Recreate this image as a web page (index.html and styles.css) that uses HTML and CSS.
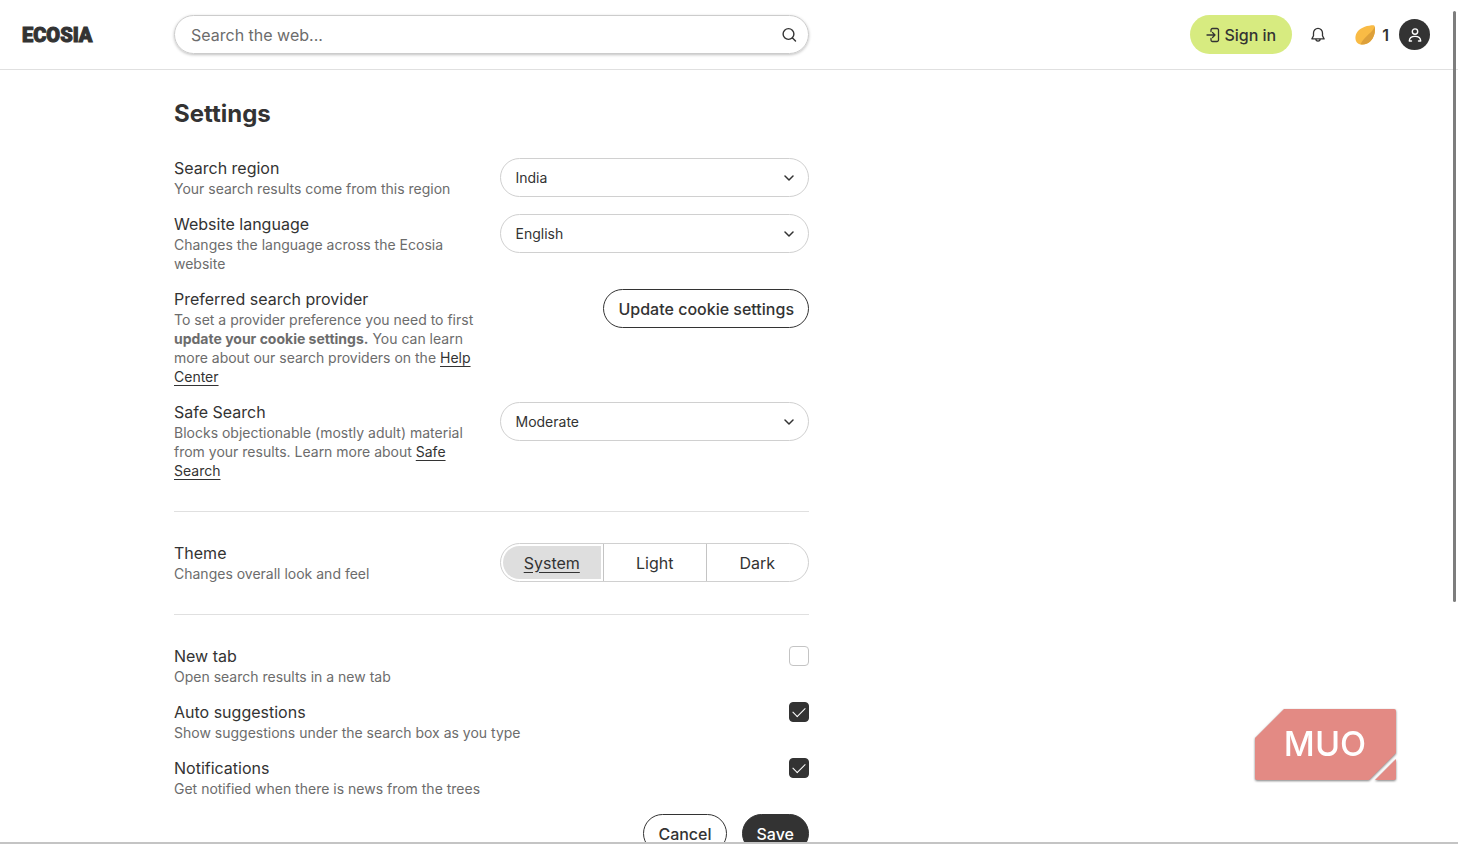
FILE: index.html
```
<!DOCTYPE html>
<html lang="en">
<head>
    <meta charset="UTF-8">
    <meta name="viewport" content="width=device-width, initial-scale=1.0">
    <title>Ecosia - Settings</title>
    <link rel="stylesheet" href="styles.css">
</head>
<body>
    <header class="header">
        <a class="logo" href="#">ECOSIA</a>
        <form class="search" role="search">
            <input class="search-input" type="search" placeholder="Search the web..." aria-label="Search the web">
            <button class="search-btn" type="submit" aria-label="Search">
                <svg width="16" height="16" viewBox="0 0 16 16" fill="none" stroke="currentColor" stroke-width="1.4" stroke-linecap="round">
                    <circle cx="7.500" cy="7" r="5.400"/>
                    <path d="M11.500 11l3 3"/>
                </svg>
            </button>
        </form>
        <nav class="header-nav">
            <a class="sign-in" href="#">
                <svg width="14" height="16" viewBox="0 0 14 16" fill="none" stroke="currentColor" stroke-width="1.3" stroke-linecap="round" stroke-linejoin="round">
                    <path d="M5 4.500V3a1.500 1.500 0 0 1 1.500-1.500h4.500A1.500 1.500 0 0 1 12.500 3v10a1.500 1.500 0 0 1-1.500 1.500H6.500A1.500 1.500 0 0 1 5 13v-1.500"/>
                    <path d="M1 8h8M6.500 5.500L9 8l-2.500 2.500"/>
                </svg>
                Sign in
            </a>
            <button class="bell" aria-label="Notifications">
                <svg width="16" height="16" viewBox="0 0 16 16" fill="none" stroke="currentColor" stroke-width="1.3" stroke-linejoin="round">
                    <path d="M8 1.400a4.500 4.500 0 0 0-4.500 4.500v2.800L1.900 11.900h12.200l-1.600-3.200V5.900A4.500 4.500 0 0 0 8 1.400z"/>
                    <path d="M5.900 12a2.100 2.100 0 0 0 4.200 0"/>
                </svg>
            </button>
            <a class="seeds" href="#" aria-label="1 seed">
                <svg width="20" height="20" viewBox="0 0 20 20">
                    <path d="M18.500.3C13 .3 6 2.300 2.600 6.500-.3 10.200-.3 15.600 2.400 18c3 2.600 9.600 2.100 13.300-1.900C19.800 11.700 20.600 5.500 19.600 1.200q-.2-.9-1.100-.9z" fill="#f9bb45"/>
                    <path d="M19.600 1.200C18.300 7.500 9.500 10.500 5.500 19.200c3.300.8 7.400-.1 10.200-3.100C19.800 11.700 20.600 5.500 19.600 1.200z" fill="#dda03a"/>
                </svg>
                <span>1</span>
            </a>
            <button class="avatar" aria-label="Account">
                <svg width="14" height="14" viewBox="0 0 14 14" fill="none" stroke="currentColor" stroke-width="1.4" stroke-linecap="round" stroke-linejoin="round">
                    <circle cx="7" cy="3.600" r="2.700"/>
                    <path d="M3.500 13H1.300c.1-3 2.200-4.600 5.700-4.600s5.600 1.600 5.700 4.600h-2.200"/>
                </svg>
            </button>
        </nav>
    </header>

    <main class="main">
        <form class="settings">
            <h1>Settings</h1>

            <section class="group">
                <div class="row">
                    <div>
                        <label class="label" for="region">Search region</label>
                        <p class="desc">Your search results come from this region</p>
                    </div>
                    <div class="select">
                        <select id="region"><option>India</option></select>
                        <svg width="10" height="6" viewBox="0 0 10 6"><path d="M1 1l4 4 4-4"/></svg>
                    </div>
                </div>
                <div class="row">
                    <div>
                        <label class="label" for="language">Website language</label>
                        <p class="desc">Changes the language across the Ecosia website</p>
                    </div>
                    <div class="select">
                        <select id="language"><option>English</option></select>
                        <svg width="10" height="6" viewBox="0 0 10 6"><path d="M1 1l4 4 4-4"/></svg>
                    </div>
                </div>
                <div class="row">
                    <div>
                        <h2 class="label">Preferred search provider</h2>
                        <p class="desc">To set a provider preference you need to first <b>update your cookie settings.</b> You can learn more about our search providers on the <a href="#">Help Center</a></p>
                    </div>
                    <button class="btn btn-end" type="button">Update cookie settings</button>
                </div>
                <div class="row">
                    <div>
                        <label class="label" for="safe">Safe Search</label>
                        <p class="desc">Blocks objectionable (mostly adult) material from your results. Learn more about <a href="#">Safe Search</a></p>
                    </div>
                    <div class="select">
                        <select id="safe"><option>Moderate</option></select>
                        <svg width="10" height="6" viewBox="0 0 10 6"><path d="M1 1l4 4 4-4"/></svg>
                    </div>
                </div>
            </section>

            <section class="group">
                <div class="row">
                    <div>
                        <h2 class="label" id="theme">Theme</h2>
                        <p class="desc">Changes overall look and feel</p>
                    </div>
                    <div class="segments" role="radiogroup" aria-labelledby="theme">
                        <label class="segment"><input type="radio" name="theme" checked><span>System</span></label>
                        <label class="segment"><input type="radio" name="theme"><span>Light</span></label>
                        <label class="segment"><input type="radio" name="theme"><span>Dark</span></label>
                    </div>
                </div>
            </section>

            <section class="group">
                <div class="row row-check">
                    <div>
                        <label class="label" for="newtab">New tab</label>
                        <p class="desc">Open search results in a new tab</p>
                    </div>
                    <input class="check" type="checkbox" id="newtab">
                </div>
                <div class="row row-check">
                    <div>
                        <label class="label" for="suggest">Auto suggestions</label>
                        <p class="desc">Show suggestions under the search box as you type</p>
                    </div>
                    <input class="check" type="checkbox" id="suggest" checked>
                </div>
                <div class="row row-check">
                    <div>
                        <label class="label" for="notify">Notifications</label>
                        <p class="desc">Get notified when there is news from the trees</p>
                    </div>
                    <input class="check" type="checkbox" id="notify" checked>
                </div>
                <div class="actions">
                    <button class="btn" type="reset">Cancel</button>
                    <button class="btn btn-dark" type="submit">Save</button>
                </div>
            </section>
        </form>
    </main>

    <div class="scroll-thumb"></div>

    <svg class="badge" width="142" height="73" viewBox="0 0 142 73" role="img" aria-label="MUO">
        <path d="M29 0h110q2 0 2 2v42L114 71H2q-2 0-2-2V29z" fill="#e38a84"/>
        <path d="M141 50v19q0 2-2 2h-19z" fill="#e38a84"/>
        <text x="70" y="47" text-anchor="middle">MUO</text>
    </svg>
</body>
</html>
```
FILE: styles.css
```
* {
    margin: 0;
    padding: 0;
    box-sizing: border-box;
}

body {
    font-family: Inter, "Liberation Sans", sans-serif;
    font-size: 16px;
    color: #333;
    background: #fff;
    height: 100vh;
    display: flex;
    flex-direction: column;
    overflow: hidden;
    border-bottom: 2px solid #c4c4c4;
}

button, input, select {
    font: inherit;
    color: inherit;
}

button {
    background: none;
    border: none;
    cursor: pointer;
}

a {
    color: #333;
}

svg {
    display: block;
}

.header {
    display: flex;
    align-items: center;
    flex-shrink: 0;
    padding: 15px 28px 15px 22px;
    border-bottom: 1px solid #e0e0e0;
}

.logo {
    width: 152px;
    font-family: Roboto, Inter, sans-serif;
    font-size: 20px;
    font-weight: 900;
    line-height: 24px;
    text-decoration: none;
    -webkit-text-stroke: 1px #333;
}

.search {
    flex: 1;
    max-width: 635px;
    height: 39px;
    display: flex;
    align-items: center;
    padding: 0 11px 0 16px;
    border: 1px solid #ccc;
    border-radius: 20px;
    box-shadow: 0 1px 3px rgba(0, 0, 0, 0.25);
}

.search-input {
    flex: 1;
    min-width: 0;
    background: none;
    border: none;
    outline: none;
}

.search-input::placeholder {
    color: #6c6c6c;
}

.header-nav {
    margin-left: auto;
    display: flex;
    align-items: center;
}

.sign-in {
    display: flex;
    align-items: center;
    gap: 4px;
    height: 39px;
    padding: 0 16px;
    border-radius: 20px;
    background: #d7eb80;
    font-weight: 500;
    text-decoration: none;
}

.bell {
    margin: 0 29px 0 18px;
}

.seeds {
    display: flex;
    align-items: center;
    gap: 7px;
    font-weight: 600;
    text-decoration: none;
}

.avatar {
    width: 31px;
    height: 31px;
    margin-left: 10px;
    border-radius: 50%;
    background: #333;
    color: #fff;
    display: grid;
    place-items: center;
}

.main {
    flex: 1;
    min-height: 0;
    overflow: hidden;
    padding: 28px 24px 0 174px;
}

.settings {
    max-width: 635px;
}

h1 {
    font-size: 24px;
    line-height: 32px;
    font-weight: 700;
    margin-bottom: 28px;
}

.group {
    display: flex;
    flex-direction: column;
    gap: 16px;
}

.group + .group {
    margin-top: 31px;
    padding-top: 31px;
    border-top: 1px solid #e0e0e0;
}

.row {
    display: grid;
    grid-template-columns: 1fr 1fr;
    gap: 16px;
    align-items: start;
}

.row-check {
    grid-template-columns: 1fr auto;
}

.label {
    display: block;
    font-size: 16px;
    font-weight: 400;
    line-height: 21px;
}

.desc {
    font-size: 14px;
    line-height: 19px;
    color: #6c6c6c;
}

.desc a {
    text-underline-offset: 3px;
}

.select {
    display: flex;
    align-items: center;
    height: 39px;
    border: 1px solid #d0d0d0;
    border-radius: 20px;
    padding-right: 14px;
}

.select select {
    flex: 1;
    height: 100%;
    padding-left: 15px;
    appearance: none;
    background: none;
    border: none;
    outline: none;
    font-size: 14px;
}

.select svg {
    fill: none;
    stroke: #333;
    stroke-width: 1.5;
    stroke-linecap: round;
    stroke-linejoin: round;
}

.btn {
    height: 39px;
    padding: 0 14px;
    border: 1px solid #333;
    border-radius: 20px;
    font-weight: 500;
}

.btn-end {
    justify-self: end;
}

.btn-dark {
    background: #333;
    color: #fff;
}

.segments {
    display: grid;
    grid-template-columns: repeat(3, 1fr);
    height: 39px;
    border: 1px solid #d0d0d0;
    border-radius: 20px;
    overflow: hidden;
}

.segment {
    display: grid;
    padding: 2px;
    cursor: pointer;
}

.segment + .segment {
    border-left: 1px solid #c4c4c4;
}

.segment input {
    appearance: none;
    grid-area: 1 / 1;
}

.segment span {
    grid-area: 1 / 1;
    display: grid;
    place-items: center;
}

.segment input:checked + span {
    background: #dedede;
    border-radius: 18px 0 0 18px;
    text-decoration: underline;
    text-underline-offset: 3px;
}

.check {
    appearance: none;
    width: 20px;
    height: 20px;
    border: 1px solid #c4c4c4;
    border-radius: 4px;
    display: grid;
    place-items: center;
}

.check:checked {
    background: #333;
    border-color: #333;
}

.check:checked::before {
    content: "";
    width: 11px;
    height: 6px;
    margin-bottom: 3px;
    border-left: 1px solid #fff;
    border-bottom: 1px solid #fff;
    transform: rotate(-45deg);
}

.actions {
    display: flex;
    justify-content: flex-end;
    gap: 15px;
}

.scroll-thumb {
    position: absolute;
    top: 11px;
    right: 2px;
    width: 3px;
    height: 70vh;
    border-radius: 2px;
    background: #7d7d7d;
}

.badge {
    position: absolute;
    right: 61px;
    bottom: 62px;
    filter: drop-shadow(0 1px 1px rgba(0, 0, 0, 0.5));
}

.badge text {
    font-size: 34px;
    font-weight: 500;
    fill: #fff;
}
```
